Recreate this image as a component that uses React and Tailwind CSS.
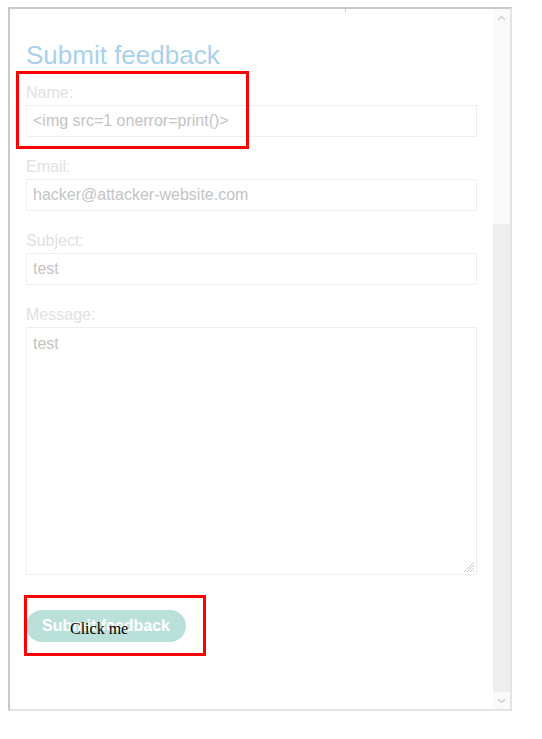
import React from 'react';

const Field = ({ label, value }) => (
    <div className="flex flex-col">
        <label className="text-[16px] leading-[18px] text-[#e1e1e1]">{label}</label>
        <div className="mt-[3px] h-8 w-[451px] border border-[#efefef] flex items-center px-[6px] text-[16px] text-[#c4c4c4] whitespace-nowrap">
            {value}
        </div>
    </div>
);

const App = () => {
    return (
        <div className="relative w-[542px] h-[739px] bg-white overflow-hidden" style={{ fontFamily: '"Liberation Sans", Arial, sans-serif' }}>
            {/* iframe-like frame */}
            <div className="ml-2 mt-[7px] w-[504px] h-[704px] border-2 border-t-[#c9c9c9] border-l-[#c9c9c9] border-r-[#e4e4e4] border-b-[#e4e4e4] flex">
                <div className="flex-1 pl-4 pt-[31px] flex flex-col">
                    <h1 className="text-[26px] leading-[31px] text-[#a9d1ec]">Submit feedback</h1>

                    <div className="mt-[13px] flex flex-col gap-[21px]">
                        <Field label="Name:" value="<img src=1 onerror=print()>" />
                        <Field label="Email:" value="hacker@attacker-website.com" />
                        <Field label="Subject:" value="test" />
                        <div className="flex flex-col">
                            <label className="text-[16px] leading-[18px] text-[#e1e1e1]">Message:</label>
                            <div className="relative mt-[3px] h-[248px] w-[451px] border border-[#efefef] px-[6px] pt-[4px] text-[16px] text-[#c4c4c4]">
                                test
                                <svg className="absolute right-[1px] bottom-[1px]" width="14" height="14" viewBox="0 0 14 14">
                                    <path d="M13 3 L3 13 M13 6 L6 13 M13 9 L9 13 M13 12 L12 13" stroke="#c8c8c8" strokeWidth="1" />
                                </svg>
                            </div>
                        </div>
                    </div>

                    <div className="mt-[35px]">
                        <button className="h-8 w-40 rounded-full bg-[#b9e1da] text-white font-bold text-[16px]">
                            Submit feedback
                        </button>
                    </div>
                </div>

                {/* scrollbar */}
                <div className="w-[17px] flex flex-col">
                    <div className="h-[17px] bg-[#fafafa] flex items-center justify-center">
                        <svg width="9" height="6" viewBox="0 0 9 6">
                            <polyline points="1,5 4.5,1.5 8,5" fill="none" stroke="#cfcfcf" strokeWidth="1.5" />
                        </svg>
                    </div>
                    <div className="h-[198px] bg-[#fafafa]"></div>
                    <div className="flex-1 bg-[#eeeeee]"></div>
                    <div className="h-[17px] bg-[#fafafa] flex items-center justify-center">
                        <svg width="9" height="6" viewBox="0 0 9 6">
                            <polyline points="1,1 4.5,4.5 8,1" fill="none" stroke="#cfcfcf" strokeWidth="1.5" />
                        </svg>
                    </div>
                </div>
            </div>

            {/* small tick on the frame edge */}
            <div className="absolute left-[345px] top-[9px] w-px h-[3px] bg-[#c9c9c9]"></div>

            {/* overlay text */}
            <div className="absolute left-[70px] top-[617px] text-[16px] text-black" style={{ fontFamily: '"Liberation Serif", "Times New Roman", serif' }}>
                Click me
            </div>

            {/* red annotation boxes */}
            <div className="absolute left-[16px] top-[71px] w-[233px] h-[78px] border-[3px] border-[#ff0000]"></div>
            <div className="absolute left-[24px] top-[595px] w-[182px] h-[61px] border-[3px] border-[#ff0000]"></div>
        </div>
    );
};

export default App;
